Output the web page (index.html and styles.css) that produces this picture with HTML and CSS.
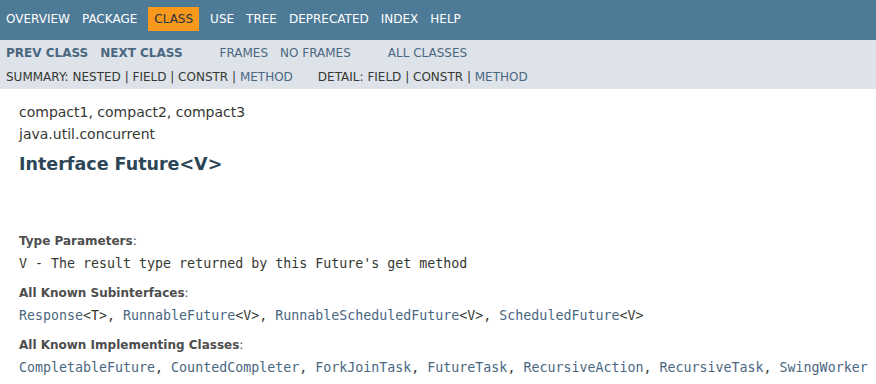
FILE: index.html
```html
<!DOCTYPE html>
<html>

<head>
    <meta charset="utf-8">
    <title>Future (Java Platform SE 8)</title>
    <link rel="stylesheet" href="styles.css">
</head>

<body>
    <div class="topNav">
        <ul class="navList">
            <li><a href="#">Overview</a></li>
            <li><a href="#">Package</a></li>
            <li class="navBarCell1Rev">Class</li>
            <li><a href="#">Use</a></li>
            <li><a href="#">Tree</a></li>
            <li><a href="#">Deprecated</a></li>
            <li><a href="#">Index</a></li>
            <li><a href="#">Help</a></li>
        </ul>
    </div>
    <div class="subNav">
        <div class="subNavRow">
            <ul class="navList">
                <li><a href="#"><span class="typeNameLink">Prev&nbsp;Class</span></a></li>
                <li><a href="#"><span class="typeNameLink">Next&nbsp;Class</span></a></li>
            </ul>
            <ul class="navList">
                <li><a href="#">Frames</a></li>
                <li><a href="#">No&nbsp;Frames</a></li>
            </ul>
            <ul class="navList">
                <li><a href="#">All&nbsp;Classes</a></li>
            </ul>
        </div>
        <div class="subNavRow small">
            <ul class="subNavList">
                <li>Summary:&nbsp;</li>
                <li>Nested&nbsp;|&nbsp;</li>
                <li>Field&nbsp;|&nbsp;</li>
                <li>Constr&nbsp;|&nbsp;</li>
                <li><a href="#">Method</a></li>
            </ul>
            <ul class="subNavList">
                <li>Detail:&nbsp;</li>
                <li>Field&nbsp;|&nbsp;</li>
                <li>Constr&nbsp;|&nbsp;</li>
                <li><a href="#">Method</a></li>
            </ul>
        </div>
    </div>

    <div class="header">
        <div class="subTitle">compact1, compact2, compact3</div>
        <div class="subTitle">java.util.concurrent</div>
        <h2 class="title">Interface Future&lt;V&gt;</h2>
    </div>

    <div class="contentContainer">
        <dl>
            <dt><span class="paramLabel">Type Parameters</span>:</dt>
            <dd><code>V</code> - The result type returned by this Future's get method</dd>
            <dt><span class="paramLabel">All Known Subinterfaces</span>:</dt>
            <dd><a href="#">Response</a>&lt;T&gt;, <a href="#">RunnableFuture</a>&lt;V&gt;, <a href="#">RunnableScheduledFuture</a>&lt;V&gt;, <a href="#">ScheduledFuture</a>&lt;V&gt;</dd>
            <dt><span class="paramLabel">All Known Implementing Classes</span>:</dt>
            <dd><a href="#">CompletableFuture</a>, <a href="#">CountedCompleter</a>, <a href="#">ForkJoinTask</a>, <a href="#">FutureTask</a>, <a href="#">RecursiveAction</a>, <a href="#">RecursiveTask</a>, <a href="#">SwingWorker</a></dd>
        </dl>
    </div>
</body>
</html>
```

FILE: styles.css
```css
body {
    margin: 0;
    background-color: #ffffff;
    color: #353833;
    font-family: 'DejaVu Sans', Arial, sans-serif;
    font-size: 14px;
}

a {
    color: #4A6782;
    text-decoration: none;
}

ul {
    list-style: none;
    margin: 0;
    padding: 0;
}

/* navigation bars */
.topNav {
    background-color: #4D7A97;
    color: #ffffff;
    height: 40px;
    padding-top: 7px;
    box-sizing: border-box;
    font-size: 12px;
}
.topNav a {
    color: #ffffff;
}
.navList {
    display: flex;
    margin-right: 25px;
}
.navList li {
    padding: 5px 6px;
    line-height: 14px;
    text-transform: uppercase;
}
.navBarCell1Rev {
    background-color: #F8981D;
    color: #253441;
    margin: 0 5px;
}

.subNav {
    background-color: #DEE3E9;
    height: 49px;
    font-size: 12px;
    box-sizing: border-box;
}
.subNavRow {
    display: flex;
    padding-top: 1px;
}
.subNavRow.small {
    padding: 5px 0 0 6px;
}
.subNavList {
    display: flex;
    margin-right: 25px;
}
.subNavList li {
    text-transform: uppercase;
    line-height: 14px;
}
.typeNameLink {
    font-weight: bold;
}

/* header */
.header {
    margin: 0 19px;
    padding-top: 15px;
}
.subTitle {
    line-height: 17px;
    margin-bottom: 5px;
}
.title {
    color: #2C4557;
    font-size: 17.5px;
    margin: 10px 0 0 0;
    line-height: 22px;
}

/* description */
.contentContainer {
    padding: 0 0 0 19px;
    margin-top: 59px;
}
dl {
    margin: 0;
}
dt {
    font-size: 12px;
    color: #4E4E4E;
    line-height: 15px;
}
.paramLabel {
    font-weight: bold;
}
dd {
    margin: 7px 0 14px 0;
    font-family: 'DejaVu Sans Mono', monospace;
    font-size: 13.3px;
    line-height: 16px;
    white-space: nowrap;
}
code {
    font-family: 'DejaVu Sans Mono', monospace;
}
```
